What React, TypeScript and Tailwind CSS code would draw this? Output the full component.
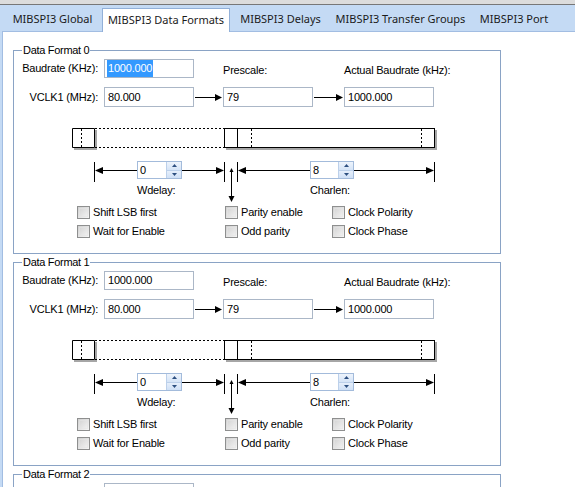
import React from "react";

const body = "font-['Liberation_Sans',Arial,sans-serif]";
const ui = "font-['Noto_Sans',sans-serif]";

const tabs = [
  { label: "MIBSPI3 Global", w: "w-[97px]" },
  { label: "MIBSPI3 Data Formats", w: "w-[130px]", active: true },
  { label: "MIBSPI3 Delays", w: "w-[99px]" },
  { label: "MIBSPI3 Transfer Groups", w: "w-[141px]" },
  { label: "MIBSPI3 Port", w: "w-[86px]" },
];

function TextBox({ value, highlight }: { value: string; highlight?: boolean }) {
  return (
    <div className="flex h-full w-[90px] items-center border border-[#abb7c7] bg-white pl-[2px]">
      <span className={highlight ? "bg-[#3399ff] px-[1px] text-white" : "px-[1px]"}>{value}</span>
    </div>
  );
}

function FlowArrow({ w }: { w: number }) {
  return (
    <svg width={w} height={20} className="block">
      <line x1={1} y1={10.5} x2={w - 7} y2={10.5} stroke="#000" />
      <polygon points={`${w - 8},7 ${w - 1},10.5 ${w - 8},14`} fill="#000" />
    </svg>
  );
}

function Spinner({ value, w }: { value: string; w: string }) {
  return (
    <div className={`flex h-[18px] border border-[#a3bbdb] bg-white ${w}`}>
      <div className="flex-1 pl-[2px] text-[11px] leading-[16px]">{value}</div>
      <div className="flex w-[15px] flex-col">
        <div className="flex flex-1 items-center justify-center border-b border-l border-[#bcd0ea] bg-linear-to-b from-[#eef4fc] to-[#d5e4f7]">
          <svg width={5} height={3}>
            <polygon points="2.5,0 5,3 0,3" fill="#2d4f80" />
          </svg>
        </div>
        <div className="flex flex-1 items-center justify-center border-l border-[#bcd0ea] bg-linear-to-b from-[#e6effb] to-[#cfe0f6]">
          <svg width={5} height={3}>
            <polygon points="0,0 5,0 2.5,3" fill="#2d4f80" />
          </svg>
        </div>
      </div>
    </div>
  );
}

// frame diagram with the Wdelay / Charlen dimension lines
function Timing() {
  const dash = { stroke: "#000", strokeDasharray: "2 2" };
  return (
    <div className="relative h-[96px]">
      <svg width={486} height={96} className="absolute left-0 top-0">
        <rect x={60} y={41} width={23} height={2} fill="#a6a6a6" />
        <rect x={81} y={23} width={2} height={20} fill="#a6a6a6" />
        <rect x={212} y={41} width={211} height={2} fill="#a6a6a6" />
        <rect x={421} y={23} width={2} height={20} fill="#a6a6a6" />

        <path d="M58.5 21.5H80.5V40.5H58.5Z" fill="#fff" stroke="#000" />
        <line x1={67.5} y1={22} x2={67.5} y2={40} {...dash} />
        <line x1={81} y1={21.5} x2={210} y2={21.5} {...dash} />
        <line x1={81} y1={40.5} x2={210} y2={40.5} {...dash} />

        <rect x={210.5} y={21.5} width={210} height={19} fill="#fff" stroke="#000" />
        <line x1={223.5} y1={22} x2={223.5} y2={40} stroke="#000" />
        <line x1={237.5} y1={22} x2={237.5} y2={40} {...dash} />
        <line x1={407.5} y1={22} x2={407.5} y2={40} {...dash} />

        <path d="M80.5 55V75M210.5 55V75M223.5 55V75M420.5 55V75" stroke="#000" />
        <path d="M89 63.5H123M168 63.5H202M232 63.5H296M340 63.5H412" stroke="#000" />
        <polygon points="81,63.5 89,60 89,67" fill="#000" />
        <polygon points="210,63.5 202,60 202,67" fill="#000" />
        <polygon points="224,63.5 232,60 232,67" fill="#000" />
        <polygon points="420,63.5 412,60 412,67" fill="#000" />

        <line x1={217.5} y1={64} x2={217.5} y2={90} stroke="#000" />
        <polygon points="217.5,61 215.5,65 219.5,65" fill="#000" />
        <polygon points="217.5,95 214.5,89 220.5,89" fill="#000" />
      </svg>
      <div className="absolute left-[123px] top-[54px]">
        <Spinner value="0" w="w-[45px]" />
      </div>
      <div className="absolute left-[296px] top-[54px]">
        <Spinner value="8" w="w-[44px]" />
      </div>
      <div className="absolute left-[123px] top-[77px] leading-[13px]">Wdelay:</div>
      <div className="absolute left-[296px] top-[77px] leading-[13px]">Charlen:</div>
    </div>
  );
}

function Check({ label }: { label: string }) {
  return (
    <div className="flex items-center gap-[3px]">
      <span className="block h-[13px] w-[13px] border border-[#8e8f8f] bg-linear-to-br from-[#d0d0d0] to-[#f6f6f6] p-[1px]">
        <span className="block h-full w-full border border-[#e4e4e4]/60" />
      </span>
      <span className="leading-[13px]">{label}</span>
    </div>
  );
}

function DataFormat({ index, selected }: { index: number; selected?: boolean }) {
  return (
    <div className="relative h-[204px] border border-[#8aa3c5]">
      <div className={`absolute -top-[8px] left-[8px] bg-white px-[1px] text-[11px] leading-[14px] tracking-[-0.3px] text-black ${body}`}>
        Data Format {index}
      </div>

      <div className="grid grid-cols-[90px_90px_29px_90px_31px_90px] grid-rows-[19px_20px] gap-y-[9px] pt-[8px]">
        <div className="self-center whitespace-nowrap pr-[6px] text-right leading-[13px]">Baudrate (KHz):</div>
        <TextBox value="1000.000" highlight={selected} />
        <div />
        <div className="mb-[1px] self-end whitespace-nowrap leading-[13px]">Prescale:</div>
        <div />
        <div className="mb-[1px] self-end whitespace-nowrap leading-[13px]">Actual Baudrate (kHz):</div>

        <div className="self-center whitespace-nowrap pr-[6px] text-right leading-[13px]">VCLK1 (MHz):</div>
        <TextBox value="80.000" />
        <FlowArrow w={29} />
        <TextBox value="79" />
        <FlowArrow w={31} />
        <TextBox value="1000.000" />
      </div>

      <Timing />

      <div className="grid grid-cols-[148px_107px_120px] auto-rows-[19px] items-center pl-[63px]">
        <Check label="Shift LSB first" />
        <Check label="Parity enable" />
        <Check label="Clock Polarity" />
        <Check label="Wait for Enable" />
        <Check label="Odd parity" />
        <Check label="Clock Phase" />
      </div>
    </div>
  );
}

export default function App() {
  return (
    <div className={`h-[487px] w-[575px] overflow-hidden bg-[#c4daf4] text-[11px] tracking-[-0.2px] text-black ${body}`}>
      <div className="h-[4px] bg-[#dcdcdc]" />
      <div className="h-px bg-[#777777]" />

      <div className={`relative z-10 flex h-[26px] items-end pl-[4px] text-[11px] tracking-normal text-[#1b1b1b] ${ui}`}>
        {tabs.map((t) =>
          t.active ? (
            <div key={t.label} className={`flex h-full items-end ${t.w}`}>
              <div className="-mb-px mx-px flex h-[24px] flex-1 items-start justify-center border border-b-0 border-[#92b0d8] bg-white pt-[3px]">
                {t.label}
              </div>
            </div>
          ) : (
            <div key={t.label} className={`flex h-full items-start justify-center pt-[6px] ${t.w}`}>
              {t.label}
            </div>
          )
        )}
      </div>

      <div className="ml-[2px] h-full border-l border-t border-[#a2bde2] bg-white pl-[10px] pr-[74px] pt-[18px]">
        <div className="flex flex-col gap-[8px]">
          <DataFormat index={0} selected />
          <DataFormat index={1} />
          <DataFormat index={2} />
        </div>
      </div>
    </div>
  );
}
